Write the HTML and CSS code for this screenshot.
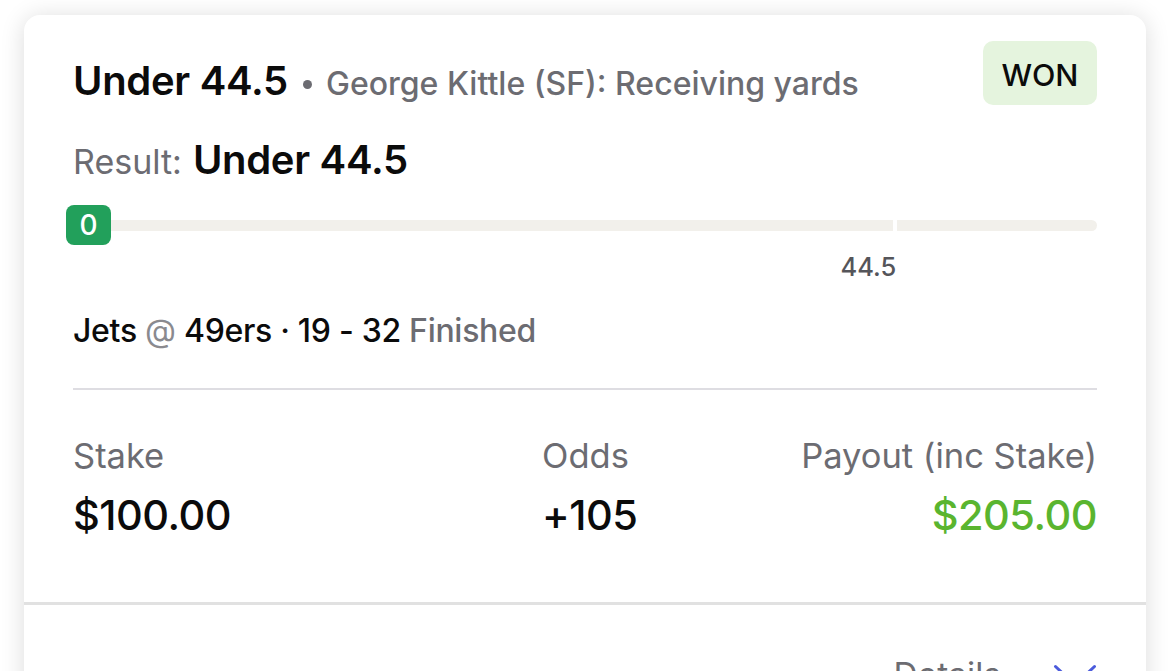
FILE: index.html
```html
<!DOCTYPE html>
<html lang="en">
<head>
<meta charset="utf-8">
<title>Bet slip</title>
<link rel="stylesheet" href="styles.css">
</head>
<body>
<div class="card">
  <div class="card-body">
    <div class="head">
      <div class="title">
        <span class="pick">Under 44.5</span>
        <span class="dot"></span>
        <span class="market">George Kittle (SF): Receiving yards</span>
      </div>
      <div class="badge">WON</div>
    </div>

    <div class="result">
      <span class="result-label">Result:</span>
      <span class="result-value">Under 44.5</span>
    </div>

    <div class="progress">
      <div class="track"></div>
      <div class="tick" style="left: 80.2%"></div>
      <div class="marker">0</div>
    </div>
    <div class="scale">
      <span class="scale-label" style="margin-left: 80.4%">44.5</span>
    </div>

    <div class="game">
      <span class="team">Jets</span>
      <span class="at">@</span>
      <span class="team">49ers · 19 - 32</span>
      <span class="status">Finished</span>
    </div>

    <div class="divider"></div>

    <div class="stats">
      <div class="stat">
        <div class="stat-label">Stake</div>
        <div class="stat-value">$100.00</div>
      </div>
      <div class="stat">
        <div class="stat-label">Odds</div>
        <div class="stat-value">+105</div>
      </div>
      <div class="stat stat-right">
        <div class="stat-label">Payout (inc Stake)</div>
        <div class="stat-value win">$205.00</div>
      </div>
    </div>
  </div>

  <div class="footer">
    <span class="details">Details</span>
    <svg class="chevron" width="44" height="26" viewBox="0 0 44 26" aria-hidden="true">
      <path d="M2.5 2.5 L22 21 L41.5 2.5" fill="none" stroke="#4b5bdc" stroke-width="3" stroke-linecap="round" stroke-linejoin="round"/>
    </svg>
  </div>
</div>
</body>
</html>
```

FILE: styles.css
```css
html, body {
  margin: 0;
  padding: 0;
  background: #ffffff;
  height: 671px;
  overflow: hidden;
}

body {
  font-family: "Inter", "Liberation Sans", sans-serif;
  color: #0b0b0b;
  padding: 15px 24px 0;
  box-sizing: border-box;
}

.card {
  background: #ffffff;
  border-radius: 16px;
  box-shadow: 0 2px 24px rgba(0, 0, 0, 0.14);
  height: 760px;
}

.card-body {
  padding: 26px 49px 0 49px;
}

.head {
  display: flex;
  justify-content: space-between;
  align-items: flex-start;
}

.title {
  display: flex;
  align-items: baseline;
  padding-top: 16px;
  white-space: nowrap;
}

.pick {
  font-size: 40px;
  line-height: 48px;
  font-weight: 600;
  color: #0b0b0b;
  letter-spacing: -0.3px;
}

.dot {
  align-self: center;
  width: 9px;
  height: 9px;
  border-radius: 50%;
  background: #6c6c72;
  margin: 3px 14px 0 15px;
}

.market {
  font-size: 32px;
  line-height: 48px;
  font-weight: 500;
  color: #6c6c72;
}

.badge {
  background: #e5f4de;
  border-radius: 10px;
  width: 114px;
  height: 64px;
  display: flex;
  align-items: center;
  justify-content: center;
  font-size: 30.5px;
  font-weight: 500;
  color: #0b0b0b;
  padding-top: 3px;
  box-sizing: border-box;
}

.result {
  display: flex;
  align-items: baseline;
  margin-top: 28px;
  white-space: nowrap;
}

.result-label {
  font-size: 34px;
  line-height: 48px;
  color: #6c6c72;
  margin-right: 11px;
}

.result-value {
  font-size: 40px;
  line-height: 48px;
  font-weight: 600;
  color: #0b0b0b;
  letter-spacing: -0.3px;
}

.progress {
  position: relative;
  height: 40px;
  margin-top: 19px;
  margin-left: -7px;
  display: flex;
  align-items: center;
}

.track {
  flex: 1;
  height: 11px;
  border-radius: 6px;
  background: #f2f0eb;
  margin-left: 30px;
}

.tick {
  position: absolute;
  top: 8px;
  width: 4px;
  height: 24px;
  background: #ffffff;
}

.marker {
  position: absolute;
  left: 0;
  top: 0;
  width: 45px;
  height: 40px;
  border-radius: 8px;
  background: #22a05b;
  color: #ffffff;
  font-size: 28px;
  font-weight: 500;
  display: flex;
  align-items: center;
  justify-content: center;
}

.scale {
  display: flex;
  margin-top: 7px;
}

.scale-label {
  font-size: 25.5px;
  line-height: 30px;
  font-weight: 500;
  color: #55555a;
  transform: translateX(-100%);
}

.game {
  margin-top: 30px;
  font-size: 32px;
  line-height: 38px;
  font-weight: 500;
  white-space: nowrap;
  letter-spacing: -0.3px;
}

.team {
  color: #0b0b0b;
}

.at {
  color: #8a8a8f;
  font-weight: 400;
}

.status {
  color: #6c6c72;
}

.divider {
  height: 2px;
  background: #dedde2;
  margin-top: 38px;
}

.stats {
  display: grid;
  grid-template-columns: 469px 1fr auto;
  padding-top: 46px;
  padding-bottom: 63px;
}

.stat-label {
  font-size: 34.5px;
  line-height: 40px;
  color: #6c6c72;
}

.stat-value {
  font-size: 41.5px;
  line-height: 48px;
  font-weight: 500;
  color: #0b0b0b;
  margin-top: 15px;
  letter-spacing: -0.5px;
}

.stat-right {
  text-align: right;
}

.win {
  color: #5ab52f;
}

.footer {
  border-top: 3px solid #e1e1e1;
  display: flex;
  justify-content: flex-end;
  align-items: flex-start;
  gap: 52px;
  padding: 50px 49px 0;
}

.details {
  font-size: 33.5px;
  line-height: 40px;
  color: #6c6c72;
}

.chevron {
  display: block;
  margin-top: 9px;
}
```
